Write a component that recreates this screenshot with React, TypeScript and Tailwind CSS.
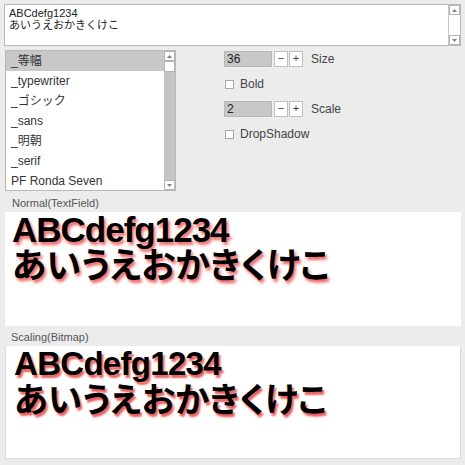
import { useState } from 'react';

const fonts = ['_等幅', '_typewriter', '_ゴシック', '_sans', '_明朝', '_serif', 'PF Ronda Seven'];

const ui = "font-['Liberation_Sans','Noto_Sans_CJK_JP',sans-serif]";

function ScrollArrow({ up }: { up: boolean }) {
    return (
        <div className="w-[11px] h-[10px] bg-white border border-[#b4b4b4] flex items-center justify-center">
            <svg width="5" height="3" viewBox="0 0 5 3">
                <path d={up ? 'M0 3 L2.5 0 L5 3Z' : 'M0 0 L2.5 3 L5 0Z'} fill="#808080" />
            </svg>
        </div>
    );
}

function Stepper({ value, label }: { value: string; label: string }) {
    return (
        <div className="flex items-center h-[16px]">
            <div className="w-[48px] h-[16px] bg-[#c8c8c8] border border-[#b8b8b8] text-[12px] leading-[14px] pl-[2px] text-[#222]">{value}</div>
            <div className="ml-[2px] w-[14px] h-[16px] bg-white border border-[#c0c0c0] text-[11px] leading-[13px] text-center text-[#444]">−</div>
            <div className="ml-[1px] w-[14px] h-[16px] bg-white border border-[#c0c0c0] text-[11px] leading-[13px] text-center text-[#444]">+</div>
            <span className="ml-[8px] text-[12px] text-[#444]">{label}</span>
        </div>
    );
}

function Check({ label }: { label: string }) {
    return (
        <div className="flex items-center h-[16px] pl-[1px]">
            <div className="w-[9px] h-[9px] bg-white border border-[#a8a8a8]" />
            <span className="ml-[6px] text-[12px] text-[#444]">{label}</span>
        </div>
    );
}

function Preview({ scaled }: { scaled?: boolean }) {
    return (
        <div
            className={`font-['Liberation_Sans','Noto_Sans_CJK_JP',sans-serif] font-bold text-black [font-feature-settings:'palt'] ${
                scaled
                    ? '[text-shadow:2px_3px_2px_rgba(230,40,40,0.75)] text-[33px] leading-[36px] pl-[8px]'
                    : '[text-shadow:2px_3px_3px_rgba(235,40,40,0.7)] text-[35px] leading-[36px] pl-[7px]'
            }`}
        >
            <div className={scaled ? 'tracking-[-0.7px]' : 'tracking-[-1px]'}>ABCdefg1234</div>
            <div className={scaled ? 'text-[34.5px]' : 'text-[35px]'}>あいうえおかきくけこ</div>
        </div>
    );
}

export default function App() {
    const [selected] = useState(0);

    return (
        <div className={`w-[465px] h-[465px] bg-[#ececec] pt-[4px] pl-[4px] pr-[4px] overflow-hidden ${ui}`}>
            {/* input area */}
            <div className="h-[42px] bg-white border border-[#b8b8b8] flex">
                <div className="flex-1 pl-[4px] pt-[2px] text-[11px] leading-[12px] text-[#222]">
                    <div>ABCdefg1234</div>
                    <div>あいうえおかきくけこ</div>
                </div>
                <div className="w-[12px] flex flex-col justify-between border-l border-[#c8c8c8] bg-white">
                    <ScrollArrow up />
                    <ScrollArrow up={false} />
                </div>
            </div>

            <div className="flex mt-[4px]">
                {/* font list */}
                <div className="ml-[1px] w-[171px] h-[141px] bg-white border border-[#b8b8b8] flex">
                    <div className="flex-1">
                        {fonts.map((f, i) => (
                            <div
                                key={f}
                                className={`h-[20px] pl-[5px] text-[12px] leading-[20px] text-[#333] ${i === selected ? 'bg-[#c8c8c8]' : ''}`}
                            >
                                {f}
                            </div>
                        ))}
                    </div>
                    <div className="w-[11px] bg-[#c4c4c4] flex flex-col">
                        <ScrollArrow up />
                        <div className="h-[11px] bg-white border border-[#b4b4b4]" />
                        <div className="flex-1" />
                        <ScrollArrow up={false} />
                    </div>
                </div>

                {/* controls */}
                <div className="ml-[48px] pt-[1px] flex flex-col gap-[9px]">
                    <Stepper value="36" label="Size" />
                    <Check label="Bold" />
                    <Stepper value="2" label="Scale" />
                    <Check label="DropShadow" />
                </div>
            </div>

            <div className="mt-[4px] pl-[8px] h-[17px] text-[11px] leading-[17px] text-[#555]">Normal(TextField)</div>
            <div className="ml-[1px] h-[114px] bg-white">
                <Preview />
            </div>

            <div className="mt-[2px] pl-[7px] h-[18px] text-[11px] leading-[18px] text-[#555]">Scaling(Bitmap)</div>
            <div className="ml-[1px] h-[113px] bg-white border-l border-r border-b border-[#dcdcdc]">
                <Preview scaled />
            </div>
        </div>
    );
}
